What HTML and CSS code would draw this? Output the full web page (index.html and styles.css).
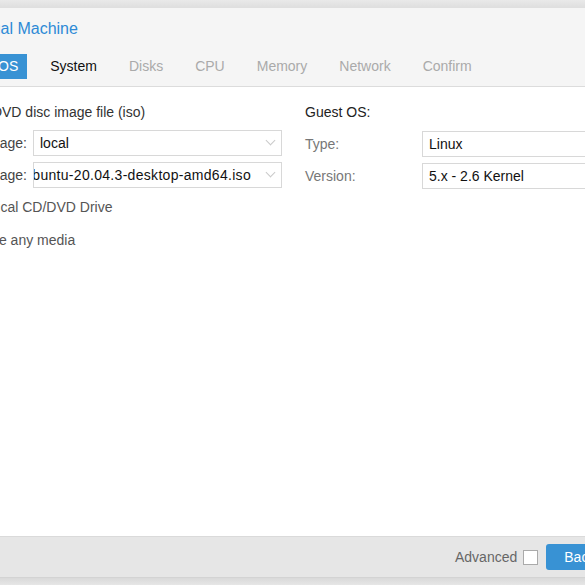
FILE: index.html
```html
<!DOCTYPE html>
<html lang="en">
<head>
    <meta charset="UTF-8">
    <meta name="viewport" content="width=device-width, initial-scale=1.0">
    <title>Create: Virtual Machine</title>
    <link rel="stylesheet" href="styles.css">
</head>
<body>
    <div class="window">
        <div class="header">
            <div class="title">Create: Virtual Machine</div>
            <div class="tabs">
                <span class="tab active">OS</span>
                <span class="tab done">System</span>
                <span class="tab">Disks</span>
                <span class="tab">CPU</span>
                <span class="tab">Memory</span>
                <span class="tab">Network</span>
                <span class="tab">Confirm</span>
            </div>
        </div>

        <div class="content">
            <div class="column left">
                <label class="radio-row first"><span class="radio checked"></span>Use CD/DVD disc image file (iso)</label>
                <div class="field-row">
                    <span class="field-label">Storage:</span>
                    <div class="combo">
                        <span class="combo-text">local</span>
                        <span class="trigger"></span>
                    </div>
                </div>
                <div class="field-row">
                    <span class="field-label">ISO image:</span>
                    <div class="combo">
                        <span class="combo-text scrolled"><span>ubuntu-20.04.3-desktop-amd64.iso</span></span>
                        <span class="trigger"></span>
                    </div>
                </div>
                <label class="radio-row physical"><span class="radio"></span>Use physical CD/DVD Drive</label>
                <label class="radio-row last"><span class="radio"></span>Do not use any media</label>
            </div>

            <div class="column right">
                <div class="group-title">Guest OS:</div>
                <div class="field-row">
                    <span class="field-label light">Type:</span>
                    <div class="combo">
                        <span class="combo-text">Linux</span>
                        <span class="trigger"></span>
                    </div>
                </div>
                <div class="field-row">
                    <span class="field-label light">Version:</span>
                    <div class="combo">
                        <span class="combo-text">5.x - 2.6 Kernel</span>
                        <span class="trigger"></span>
                    </div>
                </div>
            </div>
        </div>

        <div class="footer">
            <span class="advanced">Advanced</span>
            <span class="checkbox"></span>
            <button class="btn" type="button">Back</button>
            <button class="btn" type="button">Next</button>
        </div>
    </div>
</body>
</html>
```

FILE: styles.css
```css
body {
    margin: 0;
    width: 585px;
    height: 585px;
    overflow: hidden;
    background: linear-gradient(#e9e9e9 0, #dedede 8px, #e4e4e4 577px, #d9d9d9 578px, #e6e6e6 585px);
    font-family: "Liberation Sans", Arial, Helvetica, sans-serif;
    font-size: 14px;
    color: #222;
}

.window {
    margin: 8px 0 0 -120px;
    width: 820px;
    background-color: #fff;
}

/* header with title and wizard tabs */
.header {
    background-color: #f5f5f5;
    border-bottom: 1px solid #dcdcdc;
    padding: 11px 0 7px 0;
}

.title {
    padding-left: 31px;
    font-size: 16px;
    line-height: 20px;
    color: #2d8ad6;
}

.tabs {
    display: flex;
    gap: 14px;
    margin-top: 15px;
    padding-left: 109px;
}

.tab {
    padding: 0 9px;
    height: 25px;
    line-height: 25px;
    color: #aaa;
}

.tab.done {
    color: #111;
}

.tab.active {
    background-color: #3892d4;
    color: #fff;
}

/* form body */
.content {
    display: flex;
    height: 449px;
    padding-top: 15px;
    box-sizing: border-box;
}

.column {
    display: flex;
    flex-direction: column;
}

.column.left {
    width: 362px;
    margin-left: 40px;
}

.column.right {
    width: 395px;
    margin-left: 23px;
}

.radio-row {
    display: flex;
    align-items: center;
    height: 20px;
    color: #555;
}

.radio-row.first {
    color: #333;
    margin-bottom: 8px;
}

.radio-row.physical {
    margin-top: 3px;
}

.radio-row.last {
    margin-top: 13px;
}

.radio {
    width: 13px;
    height: 13px;
    border: 1px solid #bbb;
    border-radius: 50%;
    margin-right: 6px;
    box-sizing: border-box;
}

.radio.checked {
    border: 4px solid #3892d4;
}

.field-row {
    display: flex;
    align-items: center;
    height: 26px;
    margin-bottom: 6px;
}

.field-label {
    flex-shrink: 0;
    width: 113px;
    padding-right: 6px;
    box-sizing: border-box;
    text-align: right;
    color: #444;
}

.field-label.light {
    width: 117px;
    text-align: left;
    color: #777;
}

.combo {
    flex: 1;
    min-width: 0;
    display: flex;
    align-items: center;
    height: 26px;
    border: 1px solid #d8d8d8;
    box-sizing: border-box;
    background-color: #fff;
}

.combo-text {
    flex: 1;
    min-width: 0;
    padding-left: 6px;
    color: #111;
    white-space: nowrap;
    overflow: hidden;
}

.combo-text.scrolled {
    display: flex;
    justify-content: flex-end;
    padding-left: 3px;
}

.combo-text.scrolled span {
    flex-shrink: 0;
    letter-spacing: 0.3px;
}

.trigger {
    flex-shrink: 0;
    width: 30px;
    height: 24px;
    position: relative;
}

.trigger::after {
    content: "";
    position: absolute;
    left: 16px;
    top: 6px;
    width: 6px;
    height: 6px;
    border-right: 1px solid #cacaca;
    border-bottom: 1px solid #cacaca;
    transform: rotate(45deg);
}

.group-title {
    height: 20px;
    line-height: 20px;
    margin-bottom: 9px;
    color: #222;
}

/* footer toolbar */
.footer {
    display: flex;
    align-items: center;
    height: 40px;
    padding-left: 575px;
    background-color: #e6e6e6;
    border-top: 1px solid #dadada;
    border-bottom: 1px solid #d3d3d3;
}

.advanced {
    color: #666;
}

.checkbox {
    width: 15px;
    height: 15px;
    margin-left: 6px;
    border: 1px solid #aaa;
    background-color: #fff;
    box-sizing: border-box;
}

.btn {
    margin-left: 8px;
    height: 26px;
    padding: 0 18px;
    border: none;
    border-radius: 3px;
    background-color: #3892d4;
    color: #fff;
    font-family: inherit;
    font-size: 14px;
}
```
